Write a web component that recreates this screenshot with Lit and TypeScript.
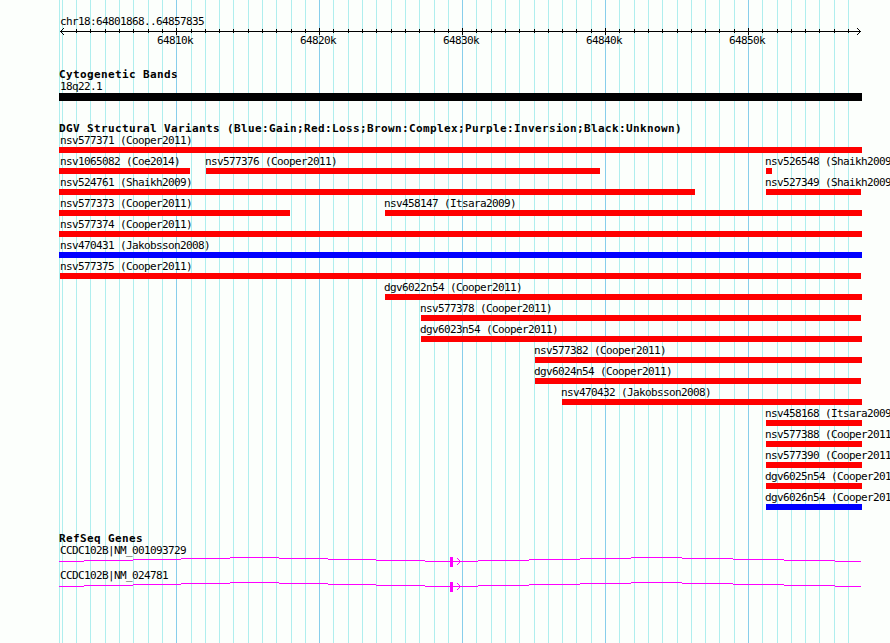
import { LitElement, html, svg, css } from "lit";
import { customElement } from "lit/decorators.js";

const LEFT = 59;
const RIGHT = 862;
const FIRST_TICK = 61.887;
const STEP = 14.294;

interface Tick { x: number; major: boolean; }
const ticks: Tick[] = Array.from({ length: 56 }, (_, i) => ({
  x: Math.round(FIRST_TICK + i * STEP),
  major: i % 10 === 8,
}));

interface Feature { name: string; x: number; end: number; kind?: string; }
const f = (name: string, x = LEFT, end = RIGHT, kind = "loss"): Feature => ({ name, x, end, kind });

const rows: Feature[][] = [
  [f("nsv577371 (Cooper2011)")],
  [f("nsv1065082 (Coe2014)", 59, 190), f("nsv577376 (Cooper2011)", 206, 600), f("nsv526548 (Shaikh2009)", 766, 772)],
  [f("nsv524761 (Shaikh2009)", 59, 695), f("nsv527349 (Shaikh2009)", 766, 861)],
  [f("nsv577373 (Cooper2011)", 59, 290), f("nsv458147 (Itsara2009)", 385)],
  [f("nsv577374 (Cooper2011)")],
  [f("nsv470431 (Jakobsson2008)", 59, 862, "gain")],
  [f("nsv577375 (Cooper2011)", 60, 861)],
  [f("dgv6022n54 (Cooper2011)", 385)],
  [f("nsv577378 (Cooper2011)", 421, 861)],
  [f("dgv6023n54 (Cooper2011)", 421)],
  [f("nsv577382 (Cooper2011)", 535)],
  [f("dgv6024n54 (Cooper2011)", 535, 861)],
  [f("nsv470432 (Jakobsson2008)", 562)],
  [f("nsv458168 (Itsara2009)", 766)],
  [f("nsv577388 (Cooper2011)", 766)],
  [f("nsv577390 (Cooper2011)", 766)],
  [f("dgv6025n54 (Cooper2011)", 766)],
  [f("dgv6026n54 (Cooper2011)", 766, 862, "gain")],
];

// Stepped intron line: start x of each segment and its height above the base.
const intron: [number, number][] = [
  [59, 0], [84, 1], [133, 2], [181, 3], [230, 4], [279, 3], [328, 2], [376, 1], [425, 0],
  [478, 1], [529, 2], [580, 3], [631, 4], [682, 3], [733, 2], [784, 1], [835, 0], [861, 0],
];

@customElement("app-root")
export class AppRoot extends LitElement {
  static styles = css`
    :host {
      display: block;
      position: relative;
      width: 890px;
      height: 643px;
      overflow: hidden;
      background: #fcfffc;
      color: #000;
      font: 11px/14px "DejaVu Sans Mono", monospace;
      letter-spacing: -0.622px;
      white-space: nowrap;
    }
    svg { display: block; shape-rendering: crispEdges; }
    .grid { position: absolute; inset: 0; }
    .minor { fill: #afeeee; }
    .major { fill: #87ceeb; }
    .tracks { position: relative; display: flex; flex-direction: column; padding-top: 15px; }
    .region { height: 12px; padding-left: 60px; }
    .scale { height: 8px; }
    .numbers { display: grid; height: 12px; line-height: 12px; }
    .numbers > span { grid-area: 1 / 1; }
    .title {
      height: 12px;
      padding-left: 59px;
      font-weight: bold;
      letter-spacing: 0.378px;
    }
    .bands { margin-top: 21px; }
    .label { height: 12px; padding-left: 60px; }
    .band { height: 8px; width: 803px; margin: 1px 0 0 59px; background: #000; }
    .variants { margin-top: 21px; }
    .row { display: grid; height: 21px; }
    .feature { grid-area: 1 / 1; }
    .name { height: 13px; }
    .name.first { padding-left: 1px; }
    .name.inner { margin-left: -1px; }
    .bar { height: 6px; }
    .loss { background: #f00; }
    .gain { background: #00f; }
    .genes { margin-top: 20px; }
    .gene { height: 25px; }
    .gene svg { fill: #f0f; }
  `;

  private gene(name: string) {
    return html`<div class="gene">
      <div class="label">${name}</div>
      <svg width="890" height="12" viewBox="0 0 890 12">
        ${intron.slice(0, -1).map(([x, h], i) =>
          svg`<rect x=${x} y=${5 - h} width=${intron[i + 1][0] - x} height="1" />`)}
        <rect x="450" y="1" width="3" height="10" />
        ${[[457, 2], [458, 3], [459, 4], [459, 6], [458, 7], [457, 8]].map(([x, y]) =>
          svg`<rect x=${x} y=${y} width="1" height="1" />`)}
      </svg>
    </div>`;
  }

  render() {
    return html`
      <svg class="grid" width="890" height="643">
        <rect class="minor" x="59" y="0" width="1" height="643" />
        ${ticks.map((t) => svg`<rect class=${t.major ? "major" : "minor"} x=${t.x} y="0" width="1" height="643" />`)}
      </svg>
      <div class="tracks">
        <div class="region">chr18:64801868..64857835</div>
        <svg class="scale" width="890" height="8" viewBox="0 27 890 8">
          <rect x="60" y="31" width="801" height="1" />
          ${ticks.slice(1).map((t) => svg`<rect x=${t.x} y=${t.major ? 28 : 29} width="1" height=${t.major ? 7 : 4} />`)}
          ${[1, 2, 3].map((d) => svg`
            <rect x=${60 + d} y=${31 - d} width="1" height="1" /><rect x=${60 + d} y=${31 + d} width="1" height="1" />
            <rect x=${860 - d} y=${31 - d} width="1" height="1" /><rect x=${860 - d} y=${31 + d} width="1" height="1" />`)}
        </svg>
        <div class="numbers">
          ${ticks.filter((t) => t.major).map((t, i) =>
            html`<span style="margin-left:${t.x - 19}px">${64810 + i * 10}k</span>`)}
        </div>
        <div class="title bands">Cytogenetic Bands</div>
        <div class="label">18q22.1</div>
        <div class="band"></div>
        <div class="title variants">DGV Structural Variants (Blue:Gain;Red:Loss;Brown:Complex;Purple:Inversion;Black:Unknown)</div>
        ${rows.map((row) => html`<div class="row">
          ${row.map((r) => html`<div class="feature" style="margin-left:${r.x}px">
            <div class="name ${r.x === LEFT ? "first" : r.x > 60 ? "inner" : ""}">${r.name}</div>
            <div class="bar ${r.kind}" style="width:${r.end - r.x}px"></div>
          </div>`)}
        </div>`)}
        <div class="title genes">RefSeq Genes</div>
        ${this.gene("CCDC102B|NM_001093729")}
        ${this.gene("CCDC102B|NM_024781")}
      </div>`;
  }
}
